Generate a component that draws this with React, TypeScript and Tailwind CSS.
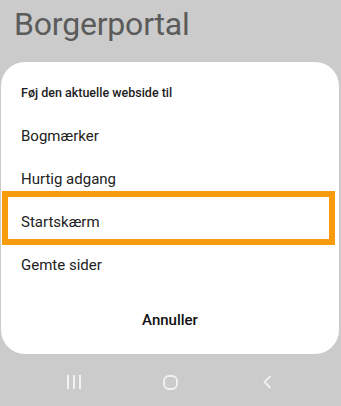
import React from "react";

const items = ["Bogmærker", "Hurtig adgang", "Startskærm", "Gemte sider"];

export default function App() {
  return (
    <div
      className="w-[341px] h-[406px] bg-[#cbcbcb] flex flex-col overflow-hidden"
      style={{ fontFamily: "Roboto, 'Noto Sans', sans-serif" }}
    >
      {/* page title behind the sheet */}
      <div className="h-[62px] pl-[14px] pt-[4px]">
        <div className="text-[32px] leading-[40px] text-[#5b5b5b] tracking-[-0.2px]">Borgerportal</div>
      </div>

      {/* bottom sheet */}
      <div className="relative mx-[1px] mr-[2px] h-[292px] bg-white rounded-[24px] flex flex-col">
        <div className="h-[53px] pl-[20px] pt-[22px] text-[12.5px] leading-[18px] font-medium text-[#1c1c1c]">
          Føj den aktuelle webside til
        </div>
        {items.map((label) => (
          <div key={label} className="h-[43px] pl-[20px] flex items-center text-[15px] text-[#222]">
            {label}
          </div>
        ))}
        <div className="mt-[11px] h-[44px] flex items-center justify-center text-[15px] font-medium text-[#111]">
          Annuller
        </div>

        {/* highlight annotation */}
        <div className="absolute left-[1px] top-[129px] w-[333px] h-[54px] border-[6px] border-[#f89c0e]" />
      </div>

      {/* navigation bar */}
      <div className="flex-1 flex items-center pl-[66px] pt-[4px]">
        <svg width="16" height="14" viewBox="0 0 16 14">
          <rect x="1" y="0" width="2" height="14" fill="#f2f2f2" />
          <rect x="7" y="0" width="2" height="14" fill="#f2f2f2" />
          <rect x="13" y="0" width="2" height="14" fill="#f2f2f2" />
        </svg>
        <svg width="15" height="15" viewBox="0 0 15 15" className="ml-[81px]">
          <rect x="1" y="1" width="13" height="13" rx="5" fill="none" stroke="#f2f2f2" strokeWidth="1.8" />
        </svg>
        <svg width="9" height="14" viewBox="0 0 9 14" className="ml-[85px]">
          <path d="M7.5 1 L1.5 7 L7.5 13" fill="none" stroke="#f2f2f2" strokeWidth="1.8" />
        </svg>
      </div>
    </div>
  );
}
